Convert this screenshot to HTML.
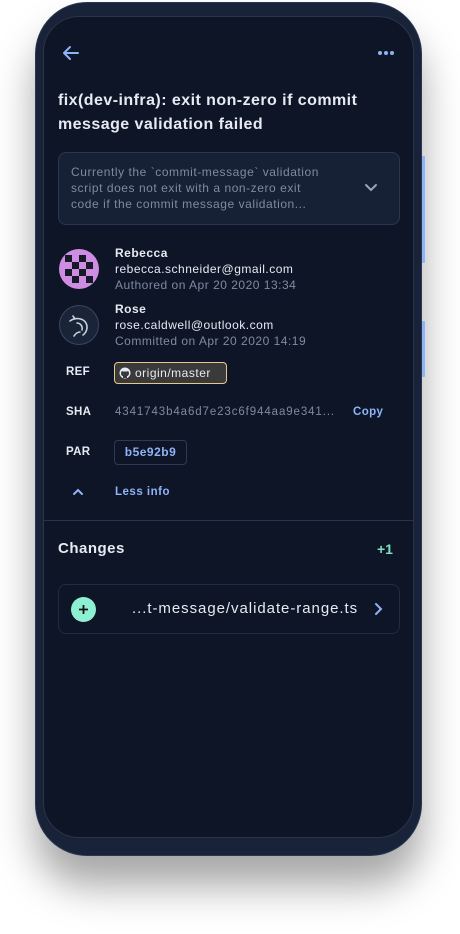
<!DOCTYPE html><html><head><style>
*{margin:0;padding:0;box-sizing:border-box}
body{width:460px;height:934px;background:#fff;position:relative;overflow:hidden;font-family:"Liberation Sans",sans-serif}
.body{position:absolute;left:35px;top:2px;width:387px;height:854px;background:#18233a;border-radius:52px;box-shadow:0 30px 40px rgba(0,0,0,.35);border:1px solid #2a3652}
.btn{position:absolute;left:422px;width:3px;background:#8fb3f7;border-radius:1px}
.screen{position:absolute;left:43px;top:16px;width:371px;height:822px;background:#0e1526;border-radius:36px;border:1px solid #2a3447;overflow:hidden}
.a{position:absolute}
.t{color:#e6eaf2}
.s{letter-spacing:0.5px}
.lbl{position:absolute;left:22px;font-size:11.5px;font-weight:bold;color:#e6eaf2;letter-spacing:0.3px}
</style></head><body>
<div class="body"></div>
<div class="btn" style="top:156px;height:107px"></div>
<div class="btn" style="top:321px;height:56px"></div>
<div class="screen">
<svg class="a" style="left:18px;top:28px" width="18" height="16" viewBox="0 0 18 16"><path d="M16 8H2M8 2L2 8l6 6" stroke="#8fb3f7" stroke-width="2" fill="none" stroke-linecap="round" stroke-linejoin="round"/></svg>
<div class="a" style="left:334px;top:34px;width:18px;height:5px">
<span class="a" style="left:0;width:4px;height:4px;border-radius:2px;background:#8fb3f7"></span><span class="a" style="left:6px;width:4px;height:4px;border-radius:2px;background:#8fb3f7"></span><span class="a" style="left:12px;width:4px;height:4px;border-radius:2px;background:#8fb3f7"></span></div>
<div class="a t" style="left:14px;top:72px;width:345px;font-size:16px;font-weight:bold;line-height:24px;letter-spacing:0.45px">fix(dev-infra): exit non-zero if commit message validation failed</div>
<div class="a" style="left:14px;top:135px;width:342px;height:73px;background:#172136;border:1px solid #2a3752;border-radius:8px">
<div class="a" style="left:12px;top:11px;width:262px;font-size:12px;line-height:16px;color:#7f8aa0;letter-spacing:0.55px">Currently the `commit-message` validation script does not exit with a non-zero exit code if the commit message validation...</div>
<svg class="a" style="left:305px;top:30px" width="14" height="10" viewBox="0 0 14 10"><path d="M2 2l5 5 5-5" stroke="#9aa5b8" stroke-width="2" fill="none" stroke-linecap="round"/></svg></div>
<svg class="a" style="left:14px;top:231px" width="42" height="42" viewBox="0 0 42 42"><defs><clipPath id="c"><circle cx="21" cy="21" r="20"/></clipPath></defs><g clip-path="url(#c)"><rect width="42" height="42" fill="#cf8ce3"/><g fill="#141a26"><rect x="7" y="7" width="7" height="7"/><rect x="21" y="7" width="7" height="7"/><rect x="14" y="14" width="7" height="7"/><rect x="28" y="14" width="7" height="7"/><rect x="7" y="21" width="7" height="7"/><rect x="21" y="21" width="7" height="7"/><rect x="14" y="28" width="7" height="7"/><rect x="28" y="28" width="7" height="7"/></g></g></svg>
<div class="a t s" style="left:71px;top:229px;font-size:12px;font-weight:bold">Rebecca</div>
<div class="a t s" style="left:71px;top:245px;font-size:12px">rebecca.schneider@gmail.com</div>
<div class="a s" style="left:71px;top:261px;font-size:12px;color:#7f8aa0">Authored on Apr 20 2020 13:34</div>
<svg class="a" style="left:14px;top:287px" width="42" height="42" viewBox="0 0 42 42"><circle cx="21" cy="21" r="19.5" fill="#1a2438" stroke="#3a4660"/><path d="M12 17c5-4 13-3 16 2 2 4 1 9-3 12M19 19c3 0 6 3 5 7M16 32c2-3 4-4 6-4M17 15l-2-3" stroke="#c8d0de" stroke-width="1.6" fill="none" stroke-linecap="round"/></svg>
<div class="a t s" style="left:71px;top:285px;font-size:12px;font-weight:bold">Rose</div>
<div class="a t s" style="left:71px;top:301px;font-size:12px">rose.caldwell@outlook.com</div>
<div class="a s" style="left:71px;top:317px;font-size:12px;color:#7f8aa0">Committed on Apr 20 2020 14:19</div>
<div class="lbl" style="top:349px">REF</div>
<div class="a t" style="left:70px;top:345px;width:113px;height:22px;background:#3a3a3a;border:1px solid #e6c98a;border-radius:4px;font-size:12px;line-height:20px;padding-left:20px;letter-spacing:0.5px">origin/master
<svg class="a" style="left:4px;top:4px" width="12" height="12" viewBox="0 0 12 12"><circle cx="6" cy="6" r="5.5" fill="#e6eaf2"/><path d="M4 11V9c-1 0-2-1-2-3 0-1 1-2 1-2l1 .5h4l1-.5s1 1 1 2c0 2-1 3-2 3v2" fill="#3a3a3a"/></svg></div>
<div class="lbl" style="top:389px">SHA</div>
<div class="a" style="left:71px;top:389px;font-size:11.5px;color:#7f8aa0;letter-spacing:0.9px">4341743b4a6d7e23c6f944aa9e341...</div>
<div class="a" style="left:309px;top:389px;font-size:11.5px;font-weight:bold;color:#8fb3f7;letter-spacing:0.4px">Copy</div>
<div class="lbl" style="top:429px">PAR</div>
<div class="a" style="left:70px;top:423px;width:73px;height:25px;border:1px solid #2c3a55;border-radius:4px;font-size:12px;font-weight:bold;line-height:23px;text-align:center;color:#8fb3f7;letter-spacing:0.5px">b5e92b9</div>
<svg class="a" style="left:28px;top:471px" width="12" height="8" viewBox="0 0 12 8"><path d="M2 6l4-4 4 4" stroke="#8fb3f7" stroke-width="2" fill="none" stroke-linecap="round"/></svg>
<div class="a" style="left:71px;top:469px;font-size:11.5px;font-weight:bold;color:#8fb3f7;letter-spacing:0.5px">Less info</div>
<div class="a" style="left:0;top:503px;width:371px;height:1px;background:#2a3447"></div>
<div class="a t" style="left:14px;top:523px;font-size:15px;font-weight:bold;letter-spacing:0.5px">Changes</div>
<div class="a" style="left:333px;top:524px;font-size:14px;font-weight:bold;color:#7fe0c0">+1</div>
<div class="a" style="left:14px;top:567px;width:342px;height:50px;border:1px solid #222c40;border-radius:8px">
<div class="a" style="left:12px;top:12px;width:25px;height:25px;border-radius:50%;background:#8ef0d2"></div>
<svg class="a" style="left:18px;top:18px" width="13" height="13" viewBox="0 0 13 13"><path d="M6.5 2v9M2 6.5h9" stroke="#111" stroke-width="1.8"/></svg>
<div class="a t" style="left:73px;top:15px;font-size:15px;letter-spacing:0.95px">...t-message/validate-range.ts</div>
<svg class="a" style="left:314px;top:17px" width="10" height="14" viewBox="0 0 10 14"><path d="M3 2l5 5-5 5" stroke="#8fb3f7" stroke-width="2" fill="none" stroke-linecap="round"/></svg></div>
</div>
</body></html>
